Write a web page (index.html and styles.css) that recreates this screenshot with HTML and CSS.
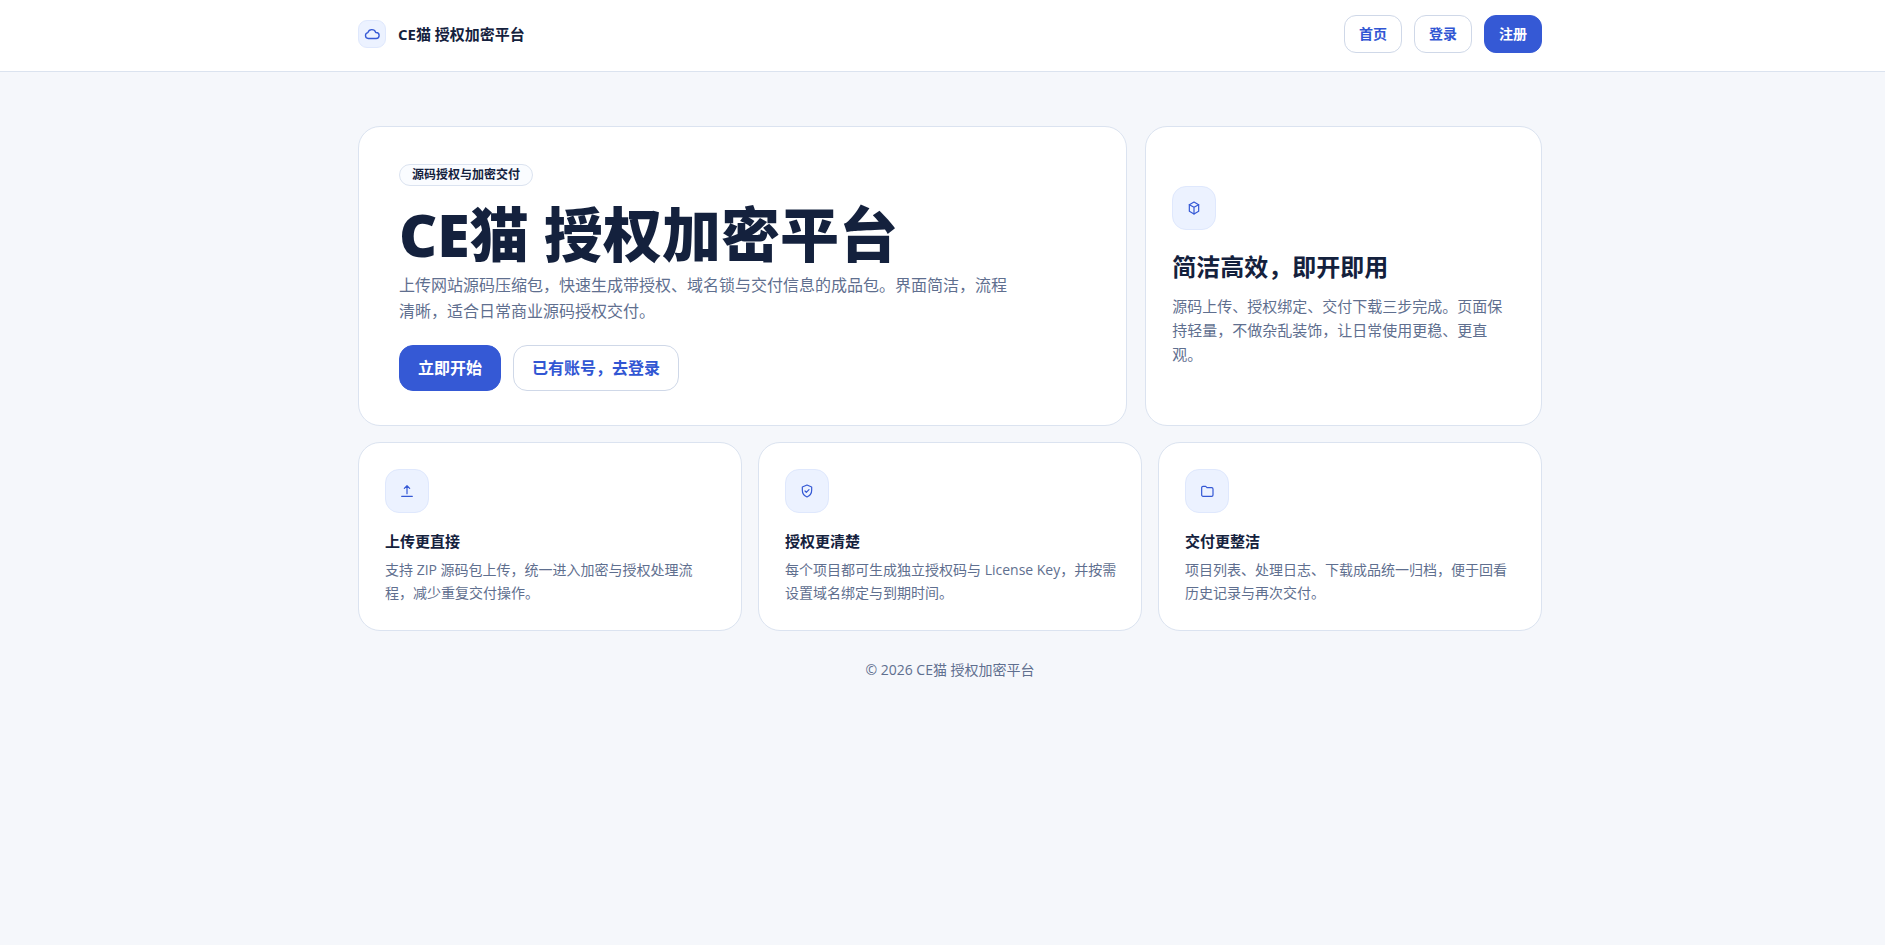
FILE: index.html
```html
<!DOCTYPE html>
<html lang="zh-CN">

<head>
    <meta charset="UTF-8">
    <meta name="viewport" content="width=device-width, initial-scale=1.0">
    <title>CE猫 授权加密平台</title>
    <link rel="stylesheet" href="styles.css">
</head>

<body>
    <header class="site-header">
        <div class="container header-inner">
            <a class="brand" href="#">
                <span class="brand-icon">
                    <svg class="icon icon-lg" viewBox="0 0 24 24" aria-hidden="true">
                        <path d="M7 18a4 4 0 0 1-.5-7.900A5.500 5.500 0 0 1 17 10h.5a4 4 0 0 1 0 8H7z" />
                    </svg>
                </span>
                <span>CE猫 授权加密平台</span>
            </a>
            <nav class="nav">
                <a class="btn" href="#">首页</a>
                <a class="btn" href="#login">登录</a>
                <a class="btn btn-primary" href="#register">注册</a>
            </nav>
        </div>
    </header>

    <main class="container">
        <section class="hero-grid">
            <div class="card hero">
                <span class="tag">源码授权与加密交付</span>
                <h1>CE猫 授权加密平台</h1>
                <p>上传网站源码压缩包，快速生成带授权、域名锁与交付信息的成品包。界面简洁，流程清晰，适合日常商业源码授权交付。</p>
                <div class="actions">
                    <a class="btn btn-large btn-primary" href="#register">立即开始</a>
                    <a class="btn btn-large" href="#login">已有账号，去登录</a>
                </div>
            </div>
            <aside class="card side">
                <span class="icon-box">
                    <svg class="icon" viewBox="0 0 24 24" aria-hidden="true">
                        <path d="M12 3l7 4v10l-7 4-7-4V7l7-4z" />
                        <path d="M12 11l7-4M12 11v10M12 11L5 7" />
                    </svg>
                </span>
                <h2>简洁高效，即开即用</h2>
                <p>源码上传、授权绑定、交付下载三步完成。页面保持轻量，不做杂乱装饰，让日常使用更稳、更直观。</p>
            </aside>
        </section>

        <section class="feature-grid">
            <article class="card feature">
                <span class="icon-box">
                    <svg class="icon" viewBox="0 0 24 24" aria-hidden="true">
                        <path d="M12 16V4M8 8l4-4 4 4M4 20h16" />
                    </svg>
                </span>
                <h3>上传更直接</h3>
                <p>支持 ZIP 源码包上传，统一进入加密与授权处理流程，减少重复交付操作。</p>
            </article>
            <article class="card feature">
                <span class="icon-box">
                    <svg class="icon" viewBox="0 0 24 24" aria-hidden="true">
                        <path d="M12 3l7 3v5c0 5-3 8.500-7 10-4-1.500-7-5-7-10V6l7-3z" />
                        <path d="M9 12l2 2 4-4" />
                    </svg>
                </span>
                <h3>授权更清楚</h3>
                <p>每个项目都可生成独立授权码与 License Key，并按需设置域名绑定与到期时间。</p>
            </article>
            <article class="card feature">
                <span class="icon-box">
                    <svg class="icon" viewBox="0 0 24 24" aria-hidden="true">
                        <path d="M4 7a2 2 0 0 1 2-2h4l2 2h7a2 2 0 0 1 2 2v9a2 2 0 0 1-2 2H6a2 2 0 0 1-2-2V7z" />
                    </svg>
                </span>
                <h3>交付更整洁</h3>
                <p>项目列表、处理日志、下载成品统一归档，便于回看历史记录与再次交付。</p>
            </article>
        </section>
    </main>

    <footer class="container footer">© 2026 CE猫 授权加密平台</footer>
</body>

</html>
```
FILE: styles.css
```css
* {
    box-sizing: border-box;
}

body {
    margin: 0;
    font-family: "Open Sans", "Noto Sans CJK SC", sans-serif;
    font-size: 14px;
    color: #14213d;
    background: #f5f7fb;
}

a {
    color: inherit;
    text-decoration: none;
}

h1,
h2,
h3,
p {
    margin: 0;
}

.container {
    max-width: 1199px;
    margin: 0 auto;
    padding-left: 15px;
}

/* header */
.site-header {
    background: #fff;
    border-bottom: 1px solid #dbe3ef;
}

.header-inner {
    display: flex;
    justify-content: space-between;
    align-items: center;
    padding-top: 15px;
    padding-bottom: 18px;
}

.brand {
    display: flex;
    align-items: center;
    gap: 12px;
    font-size: 15px;
    font-weight: 700;
    line-height: 20px;
}

.brand-icon,
.icon-box {
    display: flex;
    justify-content: center;
    align-items: center;
    color: #3559d5;
    background: #ecf2ff;
    border: 1px solid #dfe8fd;
}

.brand-icon {
    width: 28px;
    height: 28px;
    border-radius: 9px;
}

.icon-box {
    width: 44px;
    height: 44px;
    border-radius: 14px;
}

.icon {
    width: 16px;
    height: 16px;
    fill: none;
    stroke: currentColor;
    stroke-width: 1.8;
    stroke-linecap: round;
    stroke-linejoin: round;
}

.icon-lg {
    width: 18px;
    height: 18px;
}

.nav,
.actions {
    display: flex;
    gap: 12px;
}

.btn {
    padding: 0 14px;
    border: 1px solid #cfd8e8;
    border-radius: 12px;
    font-size: 14px;
    font-weight: 700;
    line-height: 36px;
    color: #3156d3;
    background: #fff;
}

.btn-primary {
    color: #fff;
    background: #3559d5;
    border-color: #3559d5;
}

.btn-large {
    padding: 0 18px;
    border-radius: 14px;
    font-size: 16px;
    line-height: 44px;
}

/* cards */
.card {
    background: #fff;
    border: 1px solid #dbe3f0;
    border-radius: 22px;
}

.card p {
    color: #5f6f8f;
}

.hero-grid {
    display: grid;
    grid-template-columns: 64fr 33fr;
    gap: 18px;
    margin-top: 54px;
}

.hero {
    padding: 37px 40px 34px;
}

.tag {
    display: block;
    width: fit-content;
    padding: 0 12px;
    border: 1px solid #dbe3f0;
    border-radius: 11px;
    font-size: 12px;
    font-weight: 700;
    line-height: 20px;
    background: #fafcff;
}

.hero h1 {
    margin: 16px 0 6px;
    font-size: 59px;
    font-weight: 800;
    line-height: 64px;
}

.hero p {
    max-width: 620px;
    font-size: 16px;
    line-height: 26px;
}

.actions {
    margin-top: 21px;
}

.side {
    display: flex;
    flex-direction: column;
    justify-content: center;
    padding: 26px;
}

.side h2 {
    margin: 20px 0 10px;
    font-size: 24px;
    line-height: 34px;
}

.side p {
    font-size: 15px;
    line-height: 24px;
}

.feature-grid {
    display: grid;
    grid-template-columns: repeat(3, 1fr);
    gap: 16px;
    margin-top: 16px;
}

.feature {
    padding: 26px 24px 26px 26px;
}

.feature h3 {
    margin: 18px 0 7px;
    font-size: 15px;
    line-height: 20px;
}

.feature p {
    line-height: 23px;
}

.footer {
    padding-top: 28px;
    padding-bottom: 28px;
    line-height: 22px;
    text-align: center;
    color: #5f6f8f;
}
```
